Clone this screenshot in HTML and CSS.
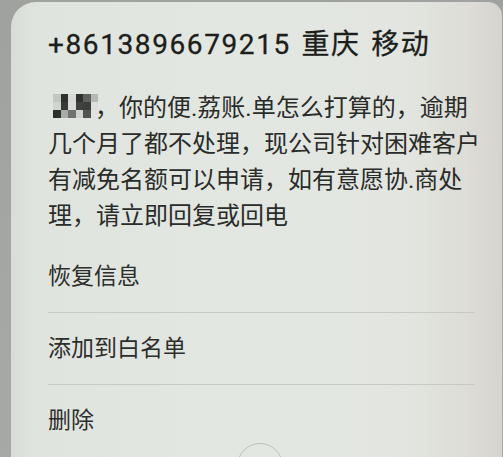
FILE: index.html
```html
<!DOCTYPE html>
<html lang="zh-CN">
<head>
<meta charset="utf-8">
<title>短信</title>
<link rel="stylesheet" href="styles.css">
</head>
<body>
<div class="screen">
  <div class="title">+8613896679215 重庆 移动</div>
  <div class="message"><span class="mosaic"><span class="cells"><i class="c1"></i><i class="c2"></i><i class="c3"></i><i class="c4"></i><i class="c5"></i><i class="c6"></i><i class="c7"></i><i class="c8"></i><i class="c9"></i><i class="c10"></i><i class="c11"></i><i class="c12"></i><i class="c13"></i><i class="c14"></i><i class="c15"></i><i class="c16"></i><i class="c17"></i><i class="c18"></i></span></span><span class="comma">，</span>你的便.荔账.单怎么打算的，逾期<br>几个月了都不处理，现公司针对困难客户<br>有减免名额可以申请，如有意愿协.商处<br>理，请立即回复或回电</div>
  <ul class="menu">
    <li class="item">恢复信息</li>
    <li class="item">添加到白名单</li>
    <li class="item last">删除</li>
  </ul>
  <div class="home"></div>
</div>
</body>
</html>
```
FILE: styles.css
```css
html, body {
  margin: 0;
  padding: 0;
}
body {
  width: 503px;
  height: 457px;
  overflow: hidden;
  background: linear-gradient(180deg, #9fa29e 0%, #a6a9a5 100%);
  font-family: Roboto, "Noto Sans CJK SC", sans-serif;
  color: #2a2c2a;
}
.screen {
  position: relative;
  overflow: hidden;
  margin: 2px 0 0 11px;
  width: 491px;
  height: 455px;
  box-sizing: border-box;
  padding: 23px 0 0 37px;
  border-radius: 25px 14px 0 0;
  background:
    linear-gradient(90deg, #d8dcd6 0px, #e0e4de 22px, #e3e7e1 45%, #e3e6e0 80%, #dddcd7 93%, #d5d4ce 100%);
}
.title {
  font-size: 28px;
  line-height: 40px;
  font-weight: 400;
  letter-spacing: 1.6px;
  color: #1c1e1c;
  white-space: nowrap;
  word-spacing: 2px;
  -webkit-text-stroke: 0.3px #1c1e1c;
}
.message {
  margin-top: 25px;
  font-size: 24px;
  line-height: 36px;
  white-space: nowrap;
  color: #2a2c2a;
}
.mosaic {
  display: inline-block;
  overflow: hidden;
  width: 45px;
  height: 24px;
  margin-left: 5px;
  vertical-align: -2px;
}
.comma {
  margin-left: -3px;
}
.cells {
  display: grid;
  grid-template-columns: repeat(6, 7.5px);
  grid-template-rows: repeat(3, 8px);
  filter: blur(0.4px);
}
.cells i { display: block; }
.c1 { background: #c3c6c2; }
.c2 { background: #2e312e; }
.c3 { background: #d6d9d5; }
.c4 { background: #2f322f; }
.c5 { background: #5e615d; }
.c6 { background: #b5b8b4; }
.c7 { background: #d0d3cf; }
.c8 { background: #363936; }
.c9 { background: #d8dbd7; }
.c10 { background: #3f423f; }
.c11 { background: #3b3e3b; }
.c12 { background: #dcdfdb; }
.c13 { background: #2c2f2c; }
.c14 { background: #a8aba7; }
.c15 { background: #6f726e; }
.c16 { background: #cfd2ce; }
.c17 { background: #505350; }
.c18 { background: #e0e3df; }
.menu {
  list-style: none;
  margin: 7px 0 0 0;
  padding: 0;
  width: 427px;
}
.item {
  height: 72px;
  box-sizing: border-box;
  font-size: 23px;
  line-height: 72px;
  color: #2c2e2c;
  border-bottom: 1px solid #c6cac4;
}
.item.last {
  border-bottom: none;
}
.home {
  position: absolute;
  left: 226px;
  top: 441px;
  width: 44px;
  height: 44px;
  border-radius: 50%;
  border: 1.5px solid rgba(140, 146, 140, 0.45);
}
```
